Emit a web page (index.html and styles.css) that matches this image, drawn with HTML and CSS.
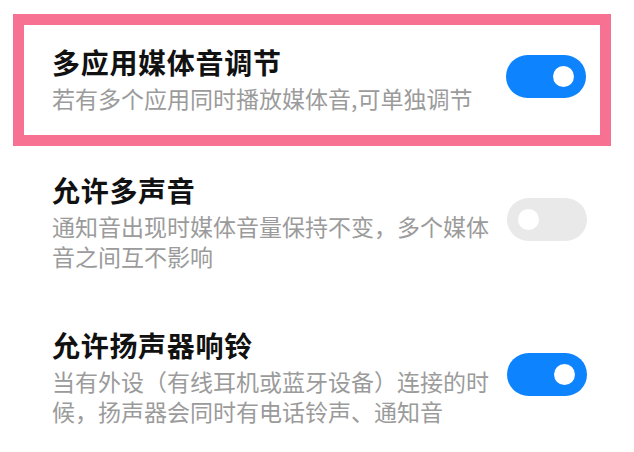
FILE: index.html
```html
<!DOCTYPE html>
<html lang="zh-CN">
<head>
    <meta charset="UTF-8">
    <title>声音设置</title>
    <meta name="viewport" content="width=device-width, initial-scale=1.0">
    <link rel="stylesheet" href="styles.css">
</head>
<body>
    <div class="list">
        <div class="row highlight">
            <div class="text">
                <p class="title">多应用媒体音调节</p>
                <p class="desc">若有多个应用同时播放媒体音,可单独调节</p>
            </div>
            <div class="switch on"><span class="knob"></span></div>
        </div>
        <div class="row">
            <div class="text">
                <p class="title">允许多声音</p>
                <p class="desc">通知音出现时媒体音量保持不变，多个媒体音之间互不影响</p>
            </div>
            <div class="switch"><span class="knob"></span></div>
        </div>
        <div class="row">
            <div class="text">
                <p class="title">允许扬声器响铃</p>
                <p class="desc">当有外设（有线耳机或蓝牙设备）连接的时候，扬声器会同时有电话铃声、通知音</p>
            </div>
            <div class="switch on"><span class="knob"></span></div>
        </div>
    </div>
</body>
</html>
```

FILE: styles.css
```css
body {
    margin: 0;
    background: #fff;
    font-family: "Noto Sans CJK SC", "Noto Sans", sans-serif;
}
p {
    margin: 0;
}
.list {
    padding-top: 14px;
}
.row {
    display: flex;
    align-items: center;
    justify-content: space-between;
    padding: 27px 47px 29px 52px;
}
.highlight {
    margin: 0 23px 0 13px;
    border: 11px solid #f77192;
    padding: 20px 14px 21px 28px;
}
.text {
    width: 455px;
}
.title {
    font-size: 28px;
    line-height: 34px;
    font-weight: 700;
    letter-spacing: .7px;
    color: #111;
}
.desc {
    margin-top: 4px;
    font-size: 23px;
    line-height: 30.5px;
    color: #9b9b9b;
}
.switch {
    position: relative;
    flex: none;
    width: 80px;
    height: 43px;
    margin-bottom: 6px;
    border-radius: 22px;
    background: #e9e9e9;
}
.switch.on {
    background: #0d84fe;
}
.knob {
    position: absolute;
    top: 11px;
    left: 11px;
    width: 21px;
    height: 21px;
    border-radius: 50%;
    background: #fff;
}
.switch.on .knob {
    left: auto;
    right: 12px;
}
```
